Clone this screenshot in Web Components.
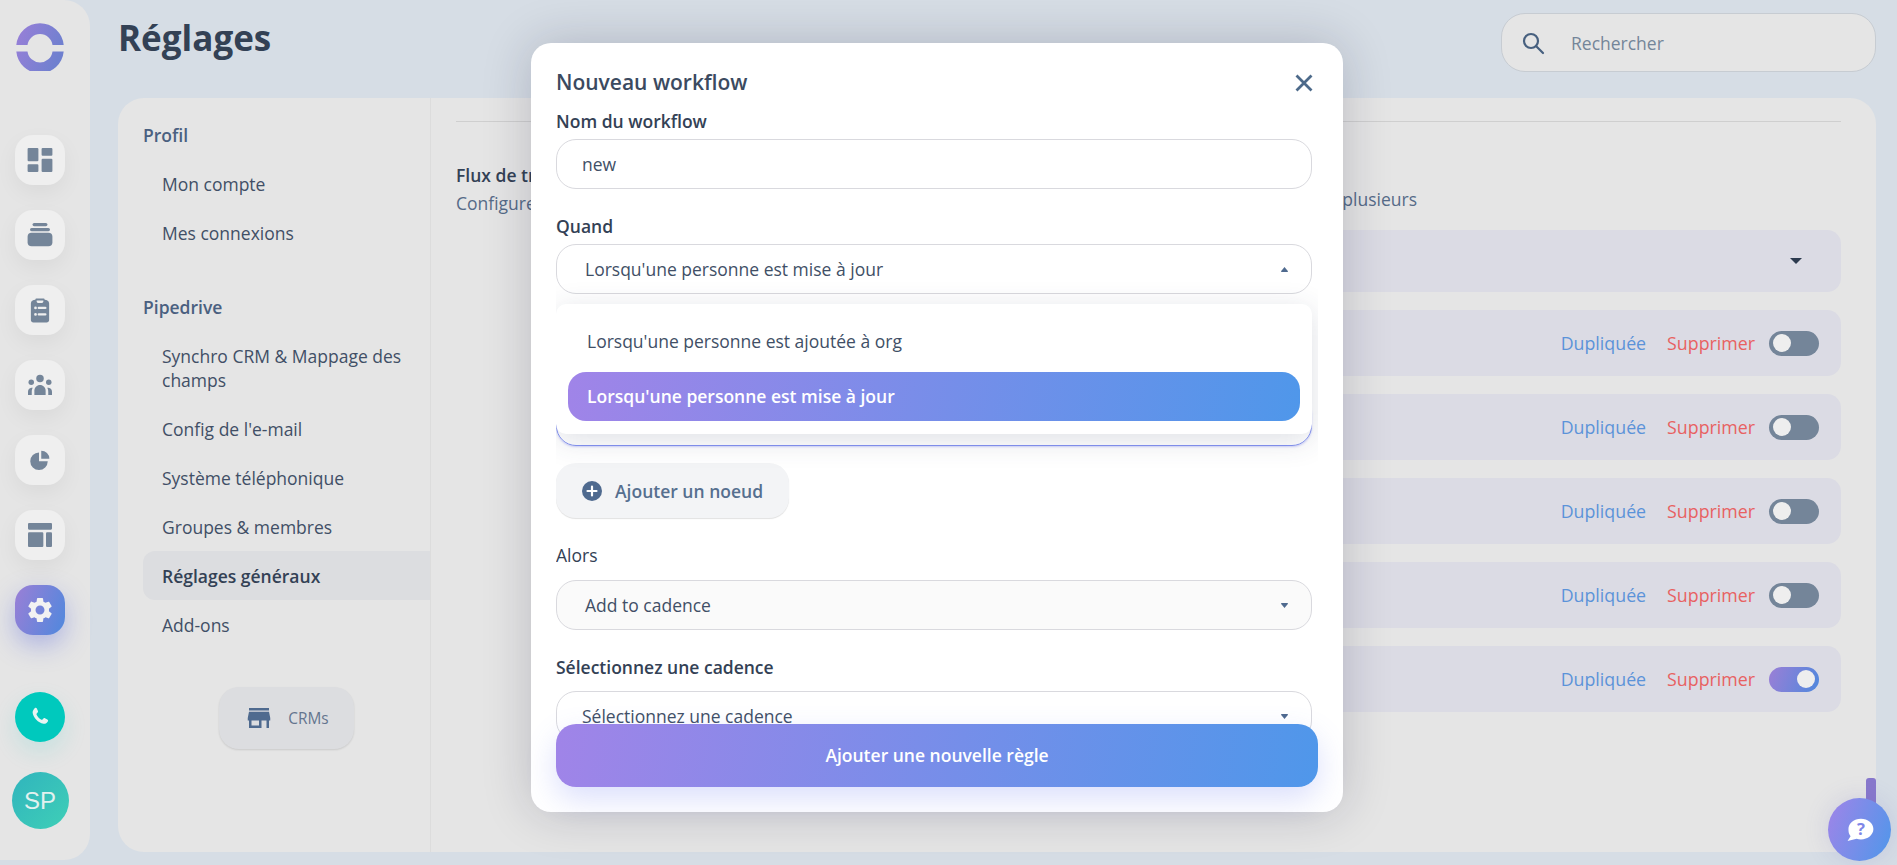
<!DOCTYPE html>
<html lang="fr">
<head>
<meta charset="utf-8">
<title>Réglages</title>
<style>
  html, body { margin: 0; height: 100%; overflow: hidden; }
  body {
    background: #d6dde5;
    font-family: "Open Sans", "Liberation Sans", sans-serif;
    color: #334155;
  }
</style>
</head>
<body>
<settings-page></settings-page>

<script>
const GRADIENT = "linear-gradient(100deg, #a084e8 0%, #4f97ea 100%)";

const ICONS = {
  dashboard: `<path d="M3.5 3h6.5a.8.8 0 0 1 .8.8v8.4a.8.8 0 0 1-.8.8H3.5a.8.8 0 0 1-.8-.8V3.8a.8.8 0 0 1 .8-.8zm0 12.2h6.5a.8.8 0 0 1 .8.8v4.2a.8.8 0 0 1-.8.8H3.5a.8.8 0 0 1-.8-.8V16a.8.8 0 0 1 .8-.8zM14 3h6.500a.8.8 0 0 1 .8.8v4.200a.8.8 0 0 1-.8.8H14a.8.8 0 0 1-.8-.8V3.800a.8.8 0 0 1 .8-.8zm0 8h6.500a.8.8 0 0 1 .8.8v8.400a.8.8 0 0 1-.8.8H14a.8.8 0 0 1-.8-.8v-8.400a.8.8 0 0 1 .8-.8z"/>`,
  stack: `<rect x="6.400" y="3" width="11.200" height="2.400" rx="1.200"/><rect x="4.500" y="6.700" width="15" height="2.400" rx="1.200"/><rect x="2.700" y="10.400" width="18.600" height="10" rx="3"/>`,
  tasks: `<path fill-rule="evenodd" d="M9 2.800h6c.4 0 .7.3.7.7v.3c1.900 0 3.600 1 3.600 2.900v13.300c0 1.200-.9 2-2 2H6.700c-1.100 0-2-.8-2-2V6.700c0-1.900 1.700-2.900 3.600-2.900v-.3c0-.4.3-.7.7-.7zM9.300 4.300v.6c0 .9.7 1.500 1.500 1.500h2.400c.8 0 1.500-.6 1.500-1.500v-.6zM7.300 10.300a1.100 1.100 0 1 0 2.200 0 1.100 1.100 0 0 0-2.200 0zm0 5.200a1.100 1.100 0 1 0 2.200 0 1.100 1.100 0 0 0-2.200 0zM11 9.400a.9.9 0 0 0 0 1.800h5.300a.9.9 0 0 0 0-1.800zm0 5.200a.9.9 0 0 0 0 1.800h5.300a.9.9 0 0 0 0-1.800z"/>`,
  groups: `<circle cx="12" cy="6.800" r="3"/><path d="M7.500 20v-3.500c0-2.500 2-4.500 4.500-4.500s4.500 2 4.500 4.500V20z"/><circle cx="5" cy="9.800" r="2.200"/><circle cx="19" cy="9.800" r="2.200"/><path d="M2.400 20v-2.600c0-1.800 1.100-3 2.700-3.300.4 0 .8 0 1.100.1-.6.9-.8 2-.8 3.300V20zM21.600 20v-2.600c0-1.800-1.100-3-2.700-3.300-.4 0-.8 0-1.100.1.6.9.8 2 .8 3.300V20z"/>`,
  pie: `<path d="M11.200 6v7h7a7 7 0 1 1-7-7zM13 4.500a6.500 6.500 0 0 1 6.500 6.500H13z"/>`,
  layout: `<rect x="3" y="3" width="18" height="5" rx=".8"/><rect x="3" y="10" width="11.500" height="11" rx=".8"/><rect x="16.500" y="10" width="4.500" height="11" rx=".8"/>`,
  gear: `<path d="M19.140 12.940c.040-.300.060-.610.060-.940 0-.320-.020-.640-.070-.940l2.030-1.580c.180-.140.230-.410.120-.610l-1.920-3.320c-.120-.220-.370-.290-.590-.220l-2.390.960c-.500-.380-1.030-.700-1.620-.940l-.360-2.540c-.040-.240-.240-.410-.480-.410h-3.840c-.240 0-.430.170-.470.410l-.360 2.540c-.590.240-1.130.570-1.620.940l-2.390-.960c-.220-.080-.470 0-.590.220L2.740 8.870c-.120.210-.080.470.120.610l2.030 1.580c-.050.300-.090.630-.090.940s.020.640.070.940l-2.030 1.580c-.180.140-.230.410-.12.610l1.920 3.320c.120.220.370.290.590.220l2.390-.960c.500.380 1.030.700 1.620.940l.360 2.540c.050.240.240.410.480.410h3.840c.240 0 .440-.170.470-.410l.360-2.540c.590-.240 1.130-.560 1.620-.940l2.390.960c.220.080.470 0 .590-.220l1.920-3.320c.120-.220.070-.470-.120-.610l-2.010-1.580zM12 15.600c-1.980 0-3.600-1.620-3.600-3.600s1.620-3.600 3.600-3.600 3.600 1.620 3.600 3.600-1.620 3.600-3.600 3.600z"/>`
};

class RailButton extends HTMLElement {
  constructor() {
    super();
    this.attachShadow({ mode: "open" });
  }

  connectedCallback() {
    const icon = this.getAttribute("icon");
    const size = this.getAttribute("size") || 30;
    this.shadowRoot.innerHTML = `
      <style>
        :host {
          display: flex;
          width: 50px;
          height: 50px;
          border-radius: 18px;
          align-items: center;
          justify-content: center;
          background: #efefef;
          color: #748599;
          box-shadow: 0 8px 22px rgba(0, 0, 0, 0.05);
        }
        :host([active]) {
          background: linear-gradient(110deg, #9b7fd6 0%, #4f88dd 100%);
          color: #f2f2f2;
          box-shadow: 0 10px 26px rgba(84, 100, 220, 0.38);
        }
        svg { width: ${size}px; height: ${size}px; fill: currentColor; }
      </style>
      <svg viewBox="0 0 24 24">${ICONS[icon]}</svg>
    `;
  }
}
customElements.define("rail-button", RailButton);

class AppRail extends HTMLElement {
  constructor() {
    super();
    this.attachShadow({ mode: "open" });
    this.shadowRoot.innerHTML = `
      <style>
        :host {
          display: flex;
          flex-direction: column;
          align-items: center;
          flex: none;
          width: 90px;
          height: 860px;
          padding: 23px 10px 0 0;
          box-sizing: border-box;
          background: #e5e5e5;
          border-radius: 0 26px 26px 0;
        }
        .logo { width: 48px; height: 48px; margin-bottom: 64px; flex: none; }
        .btns { display: flex; flex-direction: column; gap: 25px; }
        .phone {
          width: 50px;
          height: 50px;
          margin-top: 57px;
          border-radius: 50%;
          background: #00c9bd;
          box-shadow: 0 10px 24px rgba(0, 201, 189, 0.14);
          display: flex;
          align-items: center;
          justify-content: center;
        }
        .phone svg { width: 26px; height: 26px; fill: #e8f4f2; }
        .avatar {
          flex: none;
          width: 57px;
          height: 57px;
          margin-top: 30px;
          border-radius: 50%;
          background: linear-gradient(135deg, #30b4bd, #3fcfb7);
          color: #e2f1ef;
          font: 24px/57px "Liberation Sans", sans-serif;
          text-align: center;
        }
      </style>
      <svg class="logo" viewBox="0 0 48 48">
        <defs>
          <linearGradient id="lg" x1="0" y1="0" x2="1" y2="0.4">
            <stop offset="0" stop-color="#9a7fd8"/>
            <stop offset="1" stop-color="#6f80cf"/>
          </linearGradient>
        </defs>
        <path fill="url(#lg)" d="M0.300 22a23.800 24 0 0 1 47.400 0H36.500a12.600 12.600 0 0 0-25 0zM0.300 28.500a23.800 24 0 0 0 47.400 0H36.500a12.600 12.600 0 0 1-25 0z"/>
      </svg>
      <div class="btns">
        <rail-button icon="dashboard" size="32"></rail-button>
        <rail-button icon="stack" size="32"></rail-button>
        <rail-button icon="tasks"></rail-button>
        <rail-button icon="groups"></rail-button>
        <rail-button icon="pie"></rail-button>
        <rail-button icon="layout" size="32"></rail-button>
        <rail-button icon="gear" active></rail-button>
      </div>
      <div class="phone">
        <svg viewBox="0 0 24 24"><path d="M7.300 3.700c.7-.4 1.500-.2 1.800.5l1 2.300c.2.500.1 1-.3 1.400L9 8.700c-.3.300-.3.600-.2 1 .8 2.100 2.400 3.800 4.500 4.800.4.200.7.100 1-.2l.9-.9c.4-.4.900-.5 1.400-.2l2.200 1.100c.7.400.9 1.200.4 1.800-1 1.400-2.400 2.400-4 2.100-5-1-9.200-5.100-10-10.100-.2-1.700 1-3.300 2.100-4.400z"/></svg>
      </div>
      <div class="avatar">SP</div>
    `;
  }
}
customElements.define("app-rail", AppRail);

class SearchBox extends HTMLElement {
  constructor() {
    super();
    this.attachShadow({ mode: "open" });
    this.shadowRoot.innerHTML = `
      <style>
        :host {
          display: flex;
          align-items: center;
          box-sizing: border-box;
          width: 375px;
          height: 59px;
          padding-left: 19px;
          gap: 26px;
          background: #e5e5e5;
          border: 1px solid #c7ccd2;
          border-radius: 24px;
          color: #748599;
          font-size: 17.500px;
        }
        svg { width: 24px; height: 24px; fill: none; stroke: #47607f; stroke-width: 2.200; }
      </style>
      <svg viewBox="0 0 24 24"><circle cx="10" cy="10" r="7"/><path d="M15 15l7 7" stroke-linecap="round"/></svg>
      <span>Rechercher</span>
    `;
  }
}
customElements.define("search-box", SearchBox);

class NavItem extends HTMLElement {
  constructor() {
    super();
    this.attachShadow({ mode: "open" });
    this.shadowRoot.innerHTML = `
      <style>
        :host {
          display: block;
          padding: 12.500px 20px 12.500px 19px;
          font-size: 17.500px;
          line-height: 24px;
          color: #414f66;
        }
        :host([active]) {
          background: #dcdde0;
          border-radius: 12px 0 0 12px;
          font-weight: 600;
          color: #334155;
        }
      </style>
      <slot></slot>
    `;
  }
}
customElements.define("nav-item", NavItem);

class SettingsNav extends HTMLElement {
  constructor() {
    super();
    this.attachShadow({ mode: "open" });
    this.shadowRoot.innerHTML = `
      <style>
        :host {
          display: block;
          flex: none;
          width: 313px;
          box-sizing: border-box;
          padding: 25px 0 0 25px;
          border-right: 1px solid #dcdcdc;
        }
        h4 {
          margin: 0 0 12px;
          font-size: 17.500px;
          line-height: 24px;
          font-weight: 600;
          color: #4a6080;
        }
        .group + .group { margin-top: 38px; }
        .crm {
          display: flex;
          align-items: center;
          justify-content: center;
          gap: 14px;
          width: 135px;
          height: 62px;
          margin: 38px auto 0;
          background: #dcdde0;
          border-radius: 20px;
          box-shadow: 0 1px 2px rgba(0, 0, 0, 0.12);
          color: #64758f;
          font-size: 15.400px;
        }
        .crm svg { width: 30px; height: 30px; fill: #4f6a8f; }
      </style>
      <div class="group">
        <h4>Profil</h4>
        <nav-item>Mon compte</nav-item>
        <nav-item>Mes connexions</nav-item>
      </div>
      <div class="group">
        <h4>Pipedrive</h4>
        <nav-item>Synchro CRM &amp; Mappage des champs</nav-item>
        <nav-item>Config de l'e-mail</nav-item>
        <nav-item>Système téléphonique</nav-item>
        <nav-item>Groupes &amp; membres</nav-item>
        <nav-item active>Réglages généraux</nav-item>
        <nav-item>Add-ons</nav-item>
      </div>
      <div class="crm">
        <svg viewBox="0 0 24 24"><path d="M20 4H4v2h16V4zm1 10v-2l-1-5H4l-1 5v2h1v6h10v-6h4v6h2v-6h1zm-9 4H6v-4h6v4z"/></svg>
        <span>CRMs</span>
      </div>
    `;
  }
}
customElements.define("settings-nav", SettingsNav);

class WfToggle extends HTMLElement {
  constructor() {
    super();
    this.attachShadow({ mode: "open" });
    this.shadowRoot.innerHTML = `
      <style>
        :host {
          display: flex;
          align-items: center;
          box-sizing: border-box;
          width: 50px;
          height: 25px;
          padding: 0 4px;
          border-radius: 13px;
          background: #748599;
        }
        :host([on]) {
          justify-content: flex-end;
          background: linear-gradient(110deg, #9b7fd6 0%, #4f88dd 100%);
        }
        i { width: 18px; height: 18px; border-radius: 50%; background: #eeeeee; }
      </style>
      <i></i>
    `;
  }
}
customElements.define("wf-toggle", WfToggle);

class WorkflowRow extends HTMLElement {
  constructor() {
    super();
    this.attachShadow({ mode: "open" });
  }

  connectedCallback() {
    const on = this.hasAttribute("on") ? "on" : "";
    this.shadowRoot.innerHTML = `
      <style>
        :host {
          display: flex;
          align-items: center;
          justify-content: flex-end;
          height: 66px;
          padding-right: 22px;
          background: #dbdbe4;
          border-radius: 14px;
          font-size: 17.800px;
        }
        .dup { color: #5b93d9; margin-right: 21px; }
        .del { color: #e86161; margin-right: 14px; }
      </style>
      <span class="dup">Dupliquée</span>
      <span class="del">Supprimer</span>
      <wf-toggle ${on}></wf-toggle>
    `;
  }
}
customElements.define("workflow-row", WorkflowRow);

class WorkflowList extends HTMLElement {
  constructor() {
    super();
    this.attachShadow({ mode: "open" });
    this.shadowRoot.innerHTML = `
      <style>
        :host {
          display: block;
          flex: 1;
          min-width: 0;
          padding: 23px 35px 0 25px;
          font-size: 17.500px;
          line-height: 24px;
        }
        hr { margin: 0 0 41px; border: 0; border-top: 1px solid #cfcfcf; }
        .name { font-weight: 600; color: #334155; }
        .desc {
          display: flex;
          justify-content: space-between;
          align-items: flex-start;
          width: 961px;
          color: #566b88;
          margin-top: 4px;
        }
        .desc span:last-child { margin-top: -4px; }
        .rows {
          display: flex;
          flex-direction: column;
          gap: 18px;
          margin: 15px 0 0 150px;
        }
        .head {
          display: flex;
          align-items: center;
          justify-content: flex-end;
          height: 62px;
          padding-right: 39px;
          background: #dbdbe4;
          border-radius: 14px;
        }
        .head i {
          width: 0;
          height: 0;
          border: 6px solid transparent;
          border-top-color: #2c3a4e;
          border-bottom: 0;
        }
      </style>
      <hr>
      <div class="name">Flux de travail</div>
      <div class="desc"><span>Configurez</span><span>plusieurs</span></div>
      <div class="rows">
        <div class="head"><i></i></div>
        <workflow-row></workflow-row>
        <workflow-row></workflow-row>
        <workflow-row></workflow-row>
        <workflow-row></workflow-row>
        <workflow-row on></workflow-row>
      </div>
    `;
  }
}
customElements.define("workflow-list", WorkflowList);

class SelectBox extends HTMLElement {
  constructor() {
    super();
    this.attachShadow({ mode: "open" });
  }

  connectedCallback() {
    const up = this.hasAttribute("open");
    this.shadowRoot.innerHTML = `
      <style>
        :host {
          display: flex;
          align-items: center;
          justify-content: space-between;
          position: relative;
          box-sizing: border-box;
          width: 756px;
          height: 50px;
          padding: 0 23px 0 var(--pad, 28px);
          background: #fff;
          border: 1px solid #d9d9de;
          border-radius: 20px;
          font-size: 17.500px;
          color: #414f66;
        }
        :host([muted]) { background: #fafafa; }
        :host([plain]) { --pad: 25px; }
        svg { width: 7px; height: 5px; fill: #4f6a8f; flex: none; }
      </style>
      <span><slot></slot></span>
      ${up
        ? `<svg viewBox="0 0 7 5"><path d="M3.500 0L7 4.200Q7 5 6.300 5H.7Q0 5 0 4.200z"/></svg>`
        : `<svg viewBox="0 0 7 5"><path d="M3.500 5L7 .8Q7 0 6.300 0H.7Q0 0 0 .8z"/></svg>`}
      <slot name="menu"></slot>
    `;
  }
}
customElements.define("select-box", SelectBox);

class SelectMenu extends HTMLElement {
  constructor() {
    super();
    this.attachShadow({ mode: "open" });
    this.shadowRoot.innerHTML = `
      <style>
        :host {
          display: flex;
          flex-direction: column;
          gap: 5px;
          position: absolute;
          left: -1px;
          top: 59px;
          z-index: 3;
          box-sizing: border-box;
          width: 756px;
          height: 130px;
          padding: 14px 12px 13px;
          background: #fff;
          border-radius: 10px;
          box-shadow: 0 6px 30px rgba(50, 60, 95, 0.16);
          font-size: 17.500px;
          color: #414f66;
        }
        div { height: 49px; padding-left: 19px; line-height: 47px; border-radius: 18px; }
        .sel { background: ${GRADIENT}; color: #fff; font-weight: 600; line-height: 49px; }
      </style>
      <div>Lorsqu'une personne est ajoutée à org</div>
      <div class="sel">Lorsqu'une personne est mise à jour</div>
    `;
  }
}
customElements.define("select-menu", SelectMenu);

class WorkflowModal extends HTMLElement {
  constructor() {
    super();
    this.attachShadow({ mode: "open" });
    this.shadowRoot.innerHTML = `
      <style>
        :host {
          display: block;
          position: absolute;
          left: 531px;
          top: 43px;
          width: 812px;
          height: 769px;
          background: #fff;
          border-radius: 20px;
          box-shadow: 0 0 50px rgba(20, 20, 50, 0.2);
          font-size: 17.500px;
          color: #334155;
        }
        header {
          display: flex;
          align-items: center;
          justify-content: space-between;
          height: 30px;
          padding: 24px 30px 0 25px;
        }
        h2 { margin: 0; font-size: 21px; line-height: 30px; font-weight: 600; color: #3b4a60; }
        header svg { width: 18px; height: 18px; stroke: #4d6a8a; stroke-width: 2.800; fill: none; margin-top: 2px; }
        .body {
          width: 762px;
          height: 660px;
          margin-left: 25px;
          padding-top: 13px;
          box-sizing: border-box;
          overflow: hidden;
        }
        label { display: block; height: 24px; line-height: 22px; margin-bottom: 5px; font-weight: 600; }
        label.far { margin-bottom: 12px; font-weight: 500; }
        label.far2 { margin-bottom: 11px; }
        .input {
          box-sizing: border-box;
          width: 756px;
          height: 50px;
          padding-left: 25px;
          line-height: 48px;
          border: 1px solid #d9d9de;
          border-radius: 20px;
          color: #414f66;
        }
        .gap { height: 26px; }
        .focused {
          box-sizing: border-box;
          width: 756px;
          height: 50px;
          margin-top: 102px;
          border: 1px solid #8593f2;
          border-radius: 20px;
          box-shadow: 0 1px 2px rgba(120, 130, 240, 0.35);
        }
        .add {
          display: flex;
          align-items: center;
          gap: 13px;
          box-sizing: border-box;
          width: 233px;
          height: 55px;
          margin-top: 17px;
          padding-left: 26px;
          background: #f3f4f6;
          border-radius: 20px;
          box-shadow: 0 1px 1px rgba(0, 0, 0, 0.12);
          color: #566f8f;
          font-weight: 600;
        }
        .add svg { width: 20px; height: 20px; flex: none; }
        .submit {
          position: absolute;
          left: 25px;
          top: 681px;
          width: 762px;
          height: 63px;
          border-radius: 20px;
          background: ${GRADIENT};
          box-shadow: 0 12px 30px rgba(90, 110, 240, 0.22);
          color: #fff;
          font-weight: 600;
          line-height: 63px;
          text-align: center;
        }
      </style>
      <header>
        <h2>Nouveau workflow</h2>
        <svg viewBox="0 0 18 18"><path d="M1.500 1.500l15 15M16.500 1.500l-15 15"/></svg>
      </header>
      <div class="body">
        <label>Nom du workflow</label>
        <div class="input">new</div>
        <div class="gap"></div>
        <label>Quand</label>
        <select-box open>
          Lorsqu'une personne est mise à jour
          <select-menu slot="menu"></select-menu>
        </select-box>
        <div class="focused"></div>
        <div class="add">
          <svg viewBox="0 0 20 20"><circle cx="10" cy="10" r="10" fill="#4f6a8f"/><path d="M10 5.500v9M5.500 10h9" stroke="#fff" stroke-width="2.200" stroke-linecap="round"/></svg>
          <span>Ajouter un noeud</span>
        </div>
        <div class="gap"></div>
        <label class="far">Alors</label>
        <select-box muted>Add to cadence</select-box>
        <div class="gap"></div>
        <label class="far2">Sélectionnez une cadence</label>
        <select-box plain>Sélectionnez une cadence</select-box>
      </div>
      <div class="submit">Ajouter une nouvelle règle</div>
    `;
  }
}
customElements.define("workflow-modal", WorkflowModal);

class HelpFab extends HTMLElement {
  constructor() {
    super();
    this.attachShadow({ mode: "open" });
    this.shadowRoot.innerHTML = `
      <style>
        :host {
          display: block;
          position: absolute;
          left: 1828px;
          top: 798px;
          width: 63px;
          height: 63px;
        }
        .tab {
          position: absolute;
          left: 38px;
          top: -20px;
          width: 10px;
          height: 40px;
          border-radius: 3px 3px 0 0;
          background: #8878cc;
        }
        .disc {
          position: absolute;
          inset: 0;
          display: flex;
          align-items: center;
          justify-content: center;
          border-radius: 50%;
          background: linear-gradient(110deg, #a084e8 0%, #4f97ea 100%);
          box-shadow: 0 0 24px rgba(100, 100, 190, 0.18);
        }
        svg { width: 28px; height: 24px; margin-top: 1px; }
        text { font: 700 18px "Open Sans", sans-serif; fill: #7f86e8; }
      </style>
      <div class="tab"></div>
      <div class="disc">
        <svg viewBox="0 0 30 26">
          <path fill="#fff" d="M16 .800c7.500 0 13.500 4.800 13.500 11.200S23.500 23.200 16 23.200c-1.600 0-3.200-.2-4.600-.700L1.500 25l3.300-5.300C2.800 17.700 2.500 15 2.500 12 2.500 5.600 8.500.800 16 .800z"/>
          <text x="16" y="18.500" text-anchor="middle">?</text>
        </svg>
      </div>
    `;
  }
}
customElements.define("help-fab", HelpFab);

class SettingsPage extends HTMLElement {
  constructor() {
    super();
    this.attachShadow({ mode: "open" });
    this.shadowRoot.innerHTML = `
      <style>
        :host {
          display: flex;
          position: relative;
          width: 1897px;
          height: 865px;
          overflow: hidden;
        }
        main { width: 1758px; margin-left: 28px; flex: none; }
        .top {
          display: flex;
          align-items: flex-start;
          justify-content: space-between;
          height: 98px;
        }
        h1 {
          margin: 12px 0 0;
          font-size: 35px;
          line-height: 52px;
          font-weight: 700;
          color: #334155;
        }
        search-box { margin-top: 13px; }
        .panel {
          display: flex;
          height: 754px;
          background: #e5e5e5;
          border-radius: 26px;
        }
      </style>
      <app-rail></app-rail>
      <main>
        <div class="top">
          <h1>Réglages</h1>
          <search-box></search-box>
        </div>
        <div class="panel">
          <settings-nav></settings-nav>
          <workflow-list></workflow-list>
        </div>
      </main>
      <workflow-modal></workflow-modal>
      <help-fab></help-fab>
    `;
  }
}
customElements.define("settings-page", SettingsPage);
</script>
</body>
</html>
